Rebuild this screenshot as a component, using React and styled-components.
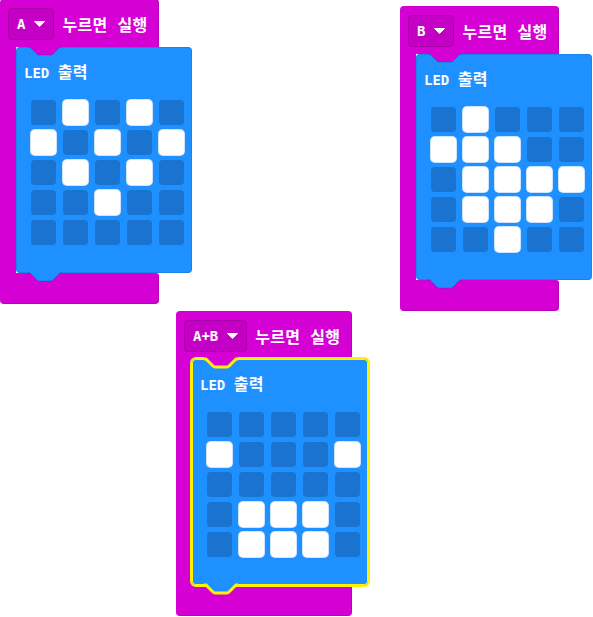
import React from "react";
import styled, { createGlobalStyle, css } from "styled-components";

const MAGENTA = "#D400D4";
const BLUE = "#1E90FF";
const YELLOW = "#FFF200";

const Global = createGlobalStyle`
  html, body { margin: 0; padding: 0; background: #ffffff; }
  body { font-family: "DejaVu Sans Mono", "Noto Sans CJK KR", monospace; }
`;

const Canvas = styled.div`
  position: relative;
  width: 593px;
  height: 617px;
  overflow: hidden;
  background: #ffffff;
`;

const EventBlock = styled.div`
  position: absolute;
  display: flex;
  flex-direction: column;
`;

const Header = styled.div`
  display: flex;
  align-items: center;
  gap: 8px;
  box-sizing: border-box;
  height: 48px;
  padding: 9px 12px 7px 8px;
  background: ${MAGENTA};
  border-radius: 4px 4px 0 0;
  box-shadow: inset -1px 0 0 rgba(0, 0, 0, 0.12);
`;

const Dropdown = styled.div`
  display: flex;
  align-items: center;
  gap: 9px;
  box-sizing: border-box;
  height: 32px;
  padding: 0 8px 0 8px;
  background: #c400c4;
  border: 1px solid #aa00aa;
  border-radius: 4px;
  color: #fff;
  font-family: "DejaVu Sans Mono", monospace;
  font-weight: bold;
  font-size: 14px;
`;

const Label = styled.span`
  color: #fff;
  font-family: "DejaVu Sans Mono", "Noto Sans CJK KR", monospace;
  font-weight: bold;
  font-size: 16px;
  letter-spacing: 0.3px;
  white-space: nowrap;
`;

const Body = styled.div`
  display: flex;
  width: 16px;
`;

const Arm = styled.div`
  width: 16px;
  flex-shrink: 0;
  background: ${MAGENTA};
`;

const Statement = styled.div`
  position: relative;
  flex-shrink: 0;
  box-sizing: border-box;
  width: 176px;
  height: 226px;
  padding: 18px 8px 0 8px;
  background: ${BLUE};
  border-radius: 4px;
  ${(p) =>
    p.$selected
      ? css`box-shadow: 0 0 0 2px ${YELLOW}, inset 0 0 0 1px ${YELLOW};`
      : css`box-shadow: inset 0 0 0 1px rgba(0, 60, 140, 0.18);`}
`;

const Title = styled.div`
  color: #fff;
  font-family: "DejaVu Sans Mono", "Noto Sans CJK KR", monospace;
  font-weight: bold;
  font-size: 14px;
  line-height: 16px;
  white-space: nowrap;
`;

const Hangul = styled.span`
  font-size: 16px;
  letter-spacing: 0.3px;
`;

const Grid = styled.div`
  display: grid;
  grid-template-columns: repeat(5, 25px);
  grid-auto-rows: 25px;
  column-gap: 7px;
  row-gap: 5px;
  margin: 19px 0 0 7px;
`;

const Led = styled.div`
  border-radius: 4px;
  background: ${(p) => (p.$on ? "#ffffff" : "#1a74cf")};
  box-shadow: ${(p) => (p.$on ? "0 0 0 1px #cfe4ff" : "none")};
`;

const Notch = styled.svg`
  position: absolute;
  left: 12px;
  top: -2px;
  overflow: visible;
`;

const Tab = styled.svg`
  position: absolute;
  left: 12px;
  bottom: -10px;
  overflow: visible;
`;

const Footer = styled.div`
  height: 31px;
  background: ${MAGENTA};
  border-radius: 0 3px 4px 4px;
  box-shadow: inset -1px -1px 0 rgba(0, 0, 0, 0.12);
`;

const V_PATH = "M0,2 H2 L9,9 Q10,10 11,10 H23 Q24,10 25,9 L32,2 H34";

function Caret() {
  return (
    <svg width="11" height="6" viewBox="0 0 11 6">
      <path d="M0.5,0.5 H10.5 L5.5,5.5 Z" fill="#fff" stroke="#fff" strokeWidth="1" strokeLinejoin="round" />
    </svg>
  );
}

function Matrix({ rows }) {
  return (
    <Grid>
      {rows.flatMap((r, i) =>
        r.split("").map((c, j) => <Led key={`${i}-${j}`} $on={c === "1"} />)
      )}
    </Grid>
  );
}

function OnButton({ x, y, button, rows, selected }) {
  return (
    <EventBlock style={{ left: x, top: y }}>
      <Header>
        <Dropdown>
          <span>{button}</span>
          <Caret />
        </Dropdown>
        <Label>누르면 실행</Label>
      </Header>
      <Body>
        <Arm />
        <Statement $selected={selected}>
          <Notch width="34" height="12" viewBox="0 0 34 12">
            <path d="M0,-1 H34 V2 H32 L25,9 Q24,10 23,10 H11 Q10,10 9,9 L2,2 H0 Z" fill={MAGENTA} />
            <path
              d={V_PATH}
              fill="none"
              stroke={selected ? YELLOW : "rgba(0,60,140,0.3)"}
              strokeWidth={selected ? 3 : 1}
            />
          </Notch>
          <Title>
            LED <Hangul>출력</Hangul>
          </Title>
          <Matrix rows={rows} />
          <Tab width="34" height="12" viewBox="0 0 34 12">
            <path d="M2,-1 H32 V2 L25,9 Q24,10 23,10 H11 Q10,10 9,9 L2,2 Z" fill={BLUE} />
            <path
              d={V_PATH}
              fill="none"
              stroke={selected ? YELLOW : "rgba(0,60,140,0.3)"}
              strokeWidth={selected ? 3 : 1}
            />
          </Tab>
        </Statement>
      </Body>
      <Footer />
    </EventBlock>
  );
}

export default function App() {
  return (
    <>
      <Global />
      <Canvas>
        <OnButton x={0} y={-1} button="A" rows={["01010", "10101", "01010", "00100", "00000"]} />
        <OnButton x={400} y={6} button="B" rows={["01000", "11100", "01111", "01110", "00100"]} />
        <OnButton x={176} y={311} button="A+B" selected rows={["00000", "10001", "00000", "01110", "01110"]} />
      </Canvas>
    </>
  );
}
